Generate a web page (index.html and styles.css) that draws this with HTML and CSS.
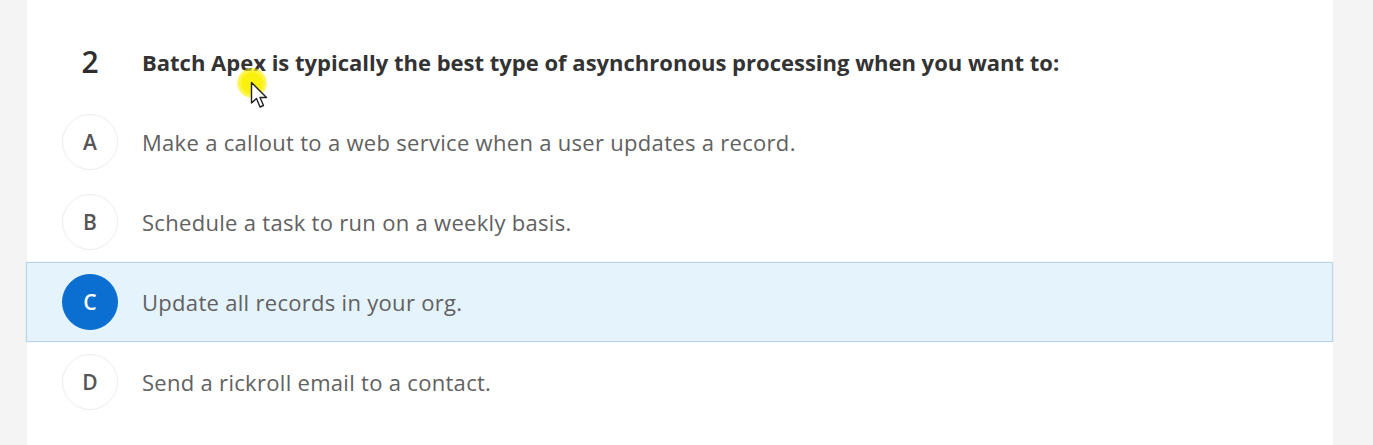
FILE: index.html
```html
<!DOCTYPE html>
<html>
<head>
<meta charset="utf-8">
<link rel="stylesheet" href="styles.css">
</head>
<body>
<div class="page">
  <div class="card">
    <div class="question">
      <div class="qnum">2</div>
      <div class="qtext">Batch Apex is typically the best type of asynchronous processing when you want to:</div>
    </div>
    <div class="options">
      <div class="option">
        <div class="badge">A</div>
        <div class="label">Make a callout to a web service when a user updates a record.</div>
      </div>
      <div class="option">
        <div class="badge">B</div>
        <div class="label">Schedule a task to run on a weekly basis.</div>
      </div>
      <div class="option selected">
        <div class="badge">C</div>
        <div class="label">Update all records in your org.</div>
      </div>
      <div class="option">
        <div class="badge">D</div>
        <div class="label">Send a rickroll email to a contact.</div>
      </div>
    </div>
  </div>
  <div class="cursor">
    <div class="halo"></div>
    <svg class="arrow" width="20" height="30" viewBox="0 0 20 30">
      <path d="M1.5 1.5 L1.5 22 L6.5 17.5 L10 26 L13.5 24.5 L10 16.5 L16.5 16.5 Z" fill="#fff" stroke="#222" stroke-width="1.4" stroke-linejoin="round"/>
    </svg>
  </div>
</div>
</body>
</html>
```

FILE: styles.css
```css
html, body {
  margin: 0;
  padding: 0;
  background: #f4f4f4;
}
body {
  width: 1373px;
  height: 445px;
  overflow: hidden;
  font-family: "Open Sans", "Noto Sans", sans-serif;
}
.page {
  position: relative;
  height: 445px;
  display: flex;
}
.card {
  margin-left: 27px;
  width: 1306px;
  height: 445px;
  background: #fff;
  display: flex;
  flex-direction: column;
}
.question {
  display: flex;
  align-items: center;
  padding: 48px 0 0 35px;
  height: 28px;
  margin-bottom: 26px;
  gap: 24px;
}
.qnum {
  width: 56px;
  text-align: center;
  font-size: 30px;
  font-weight: 600;
  color: #2e2e2e;
  line-height: 28px;
}
.qtext {
  font-size: 22px;
  font-weight: 700;
  color: #333;
  line-height: 28px;
}
.options {
  display: flex;
  flex-direction: column;
}
.option {
  height: 78px;
  border: 1px solid transparent;
  display: flex;
  align-items: center;
  padding-left: 34px;
  gap: 24px;
}
.option.selected {
  background: #e5f3fc;
  border-color: #b9d4e8;
  margin-left: -1px;
  padding-left: 35px;
  box-shadow: 0 0 1px rgba(120, 160, 200, 0.4);
}
.badge {
  width: 54px;
  height: 54px;
  border-radius: 50%;
  border: 1px solid #ececec;
  background: #fff;
  display: flex;
  align-items: center;
  justify-content: center;
  font-size: 21px;
  font-weight: 600;
  color: #555;
}
.selected .badge {
  background: #0a6fd1;
  border-color: #0a6fd1;
  color: #fff;
}
.label {
  font-size: 22px;
  letter-spacing: 0.3px;
  color: #616161;
  line-height: 28px;
}
.cursor {
  position: absolute;
  left: 237px;
  top: 68px;
  width: 34px;
  height: 44px;
}
.halo {
  position: absolute;
  left: 0;
  top: 0;
  width: 30px;
  height: 30px;
  border-radius: 50%;
  background: radial-gradient(circle, rgba(250, 240, 0, 0.95) 45%, rgba(250, 240, 0, 0.5) 70%, rgba(250, 240, 0, 0) 100%);
}
.arrow {
  position: absolute;
  left: 13px;
  top: 13px;
}
```
